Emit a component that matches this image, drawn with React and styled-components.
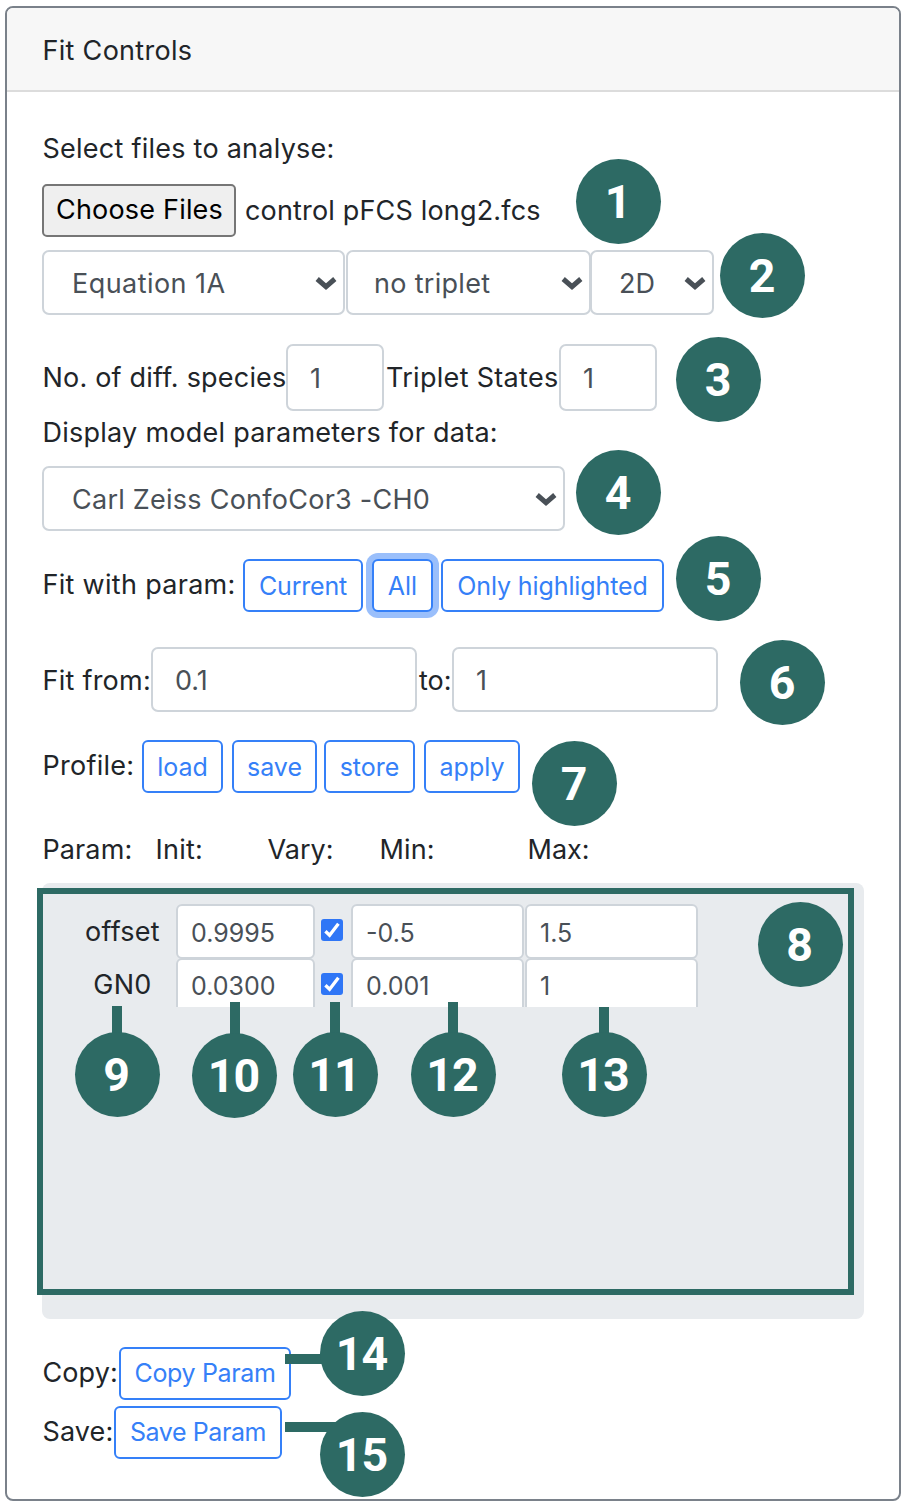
import React from "react";
import styled, { createGlobalStyle, css } from "styled-components";

const GlobalStyle = createGlobalStyle`
  *, *::before, *::after { box-sizing: border-box; }
  body {
    margin: 0;
    background: #fff;
    color: #212529;
    font-family: Inter, "Liberation Sans", sans-serif;
    font-size: 27px;
  }
`;

const Page = styled.main`
  position: relative;
  width: 914px;
  height: 1512px;
  padding: 6px 0 0 5px;
  overflow: hidden;
`;

const Card = styled.section`
  width: 896px;
  height: 1495px;
  border: 2px solid #7a818a;
  border-radius: 8px;
  background: #fff;
  overflow: hidden;
`;

const CardHeader = styled.header`
  display: flex;
  align-items: center;
  height: 84px;
  padding: 3px 35px 0;
  background: #f7f7f7;
  border-bottom: 2px solid #dcdcdc;
`;

const CardBody = styled.div`
  display: flex;
  flex-direction: column;
  padding: 37px 0 0 35px;
`;

const Row = styled.div`
  display: flex;
  align-items: center;
  flex: none;
  height: ${(p) => p.$h}px;
  margin-top: ${(p) => p.$mt || 0}px;
`;

const Label = styled.span`
  flex: none;
  width: ${(p) => (p.$w ? `${p.$w}px` : "auto")};
  padding-left: ${(p) => p.$pl ?? 0.5}px;
  padding-top: ${(p) => p.$pt || 0}px;
  padding-bottom: ${(p) => p.$pb || 0}px;
  line-height: 36px;
  letter-spacing: ${(p) => p.$ls ?? 0.25}px;
  white-space: nowrap;
`;

const FileButton = styled.button`
  width: 194px;
  height: 53px;
  padding: 0 0 2px 1px;
  margin-right: 9px;
  border: 2px solid #767676;
  border-radius: 5px;
  background: #efefef;
  color: #000;
  font: inherit;
  letter-spacing: 0.2px;
  white-space: nowrap;
`;

const fieldBase = css`
  display: flex;
  align-items: center;
  flex: none;
  width: ${(p) => p.$w}px;
  border: 2px solid #ced4da;
  border-radius: 7px;
  background: #fff;
  color: #495057;
  white-space: nowrap;
  letter-spacing: ${(p) => p.$ls || 0}px;
`;

const Picker = styled.div`
  ${fieldBase}
  justify-content: space-between;
  height: 65px;
  margin-right: ${(p) => p.$mr || 0}px;
  padding: 2px 6px 0 ${(p) => p.$pl ?? 28}px;
`;

const Field = styled.div`
  ${fieldBase}
  height: ${(p) => p.$h || 65}px;
  padding: ${(p) => p.$pt ?? 1}px 0 0 22px;
`;

const OutlineButton = styled.button`
  flex: none;
  width: ${(p) => p.$w}px;
  height: 53px;
  margin-right: ${(p) => p.$mr || 0}px;
  padding: 0 0 ${(p) => p.$pb || 0}px;
  border: 2px solid #3580f8;
  border-radius: 6px;
  background: #fff;
  color: #3580f8;
  font: inherit;
  font-size: 25px;
  letter-spacing: ${(p) => p.$ls || 0}px;
  white-space: nowrap;
  box-shadow: ${(p) => (p.$focused ? "0 0 0 6px #9abffb" : "none")};
`;

const ParamPanel = styled.div`
  flex: none;
  width: 822px;
  height: 436px;
  margin-top: 12px;
  padding: 21px 0 0 42px;
  border-radius: 8px;
  background: #e8ebee;
`;

const ParamList = styled.div`
  height: 103px;
  overflow: hidden;
`;

const ParamRow = styled.div`
  display: flex;
  height: 54px;
`;

const ParamName = styled.span`
  display: flex;
  justify-content: center;
  width: 92px;
  padding-right: 15px;
  line-height: ${(p) => p.$lh}px;
  letter-spacing: 0.25px;
`;

const ParamField = styled.div`
  ${fieldBase}
  height: 55px;
  margin-right: ${(p) => p.$mr || 0}px;
  padding: ${(p) => p.$pt}px 0 0 13px;
  border-radius: 6px;
  font-size: 25px;
`;

const Check = styled.span`
  display: grid;
  place-items: center;
  width: 22px;
  height: 22px;
  margin: ${(p) => p.$mt}px 8px 0 6px;
  border-radius: 3px;
  background: #2f76f6;
`;

const Annotations = styled.div`
  position: absolute;
  inset: 0;
  pointer-events: none;
`;

const Frame = styled.div`
  position: absolute;
  left: 37px;
  top: 888px;
  width: 817px;
  height: 407px;
  border: 6px solid #2d6a64;
`;

const Leader = styled.div`
  position: absolute;
  left: ${(p) => p.$x}px;
  top: ${(p) => p.$y}px;
  width: ${(p) => p.$w}px;
  height: ${(p) => p.$h}px;
  background: #2d6a64;
`;

const Badge = styled.div`
  position: absolute;
  left: ${(p) => p.$x}px;
  top: ${(p) => p.$y}px;
  width: 85px;
  height: 85px;
  padding: 2px 2px 0 0;
  border-radius: 50%;
  background: #2d6a64;
  color: #fff;
  font: bold 46.5px/83px Roboto, "Liberation Sans", sans-serif;
  letter-spacing: -1px;
  text-align: center;
`;

const Chevron = () => (
  <svg width="22" height="14" viewBox="0 0 22 14" fill="none">
    <path d="M2.2 2 11 9.6 19.800 2" stroke="#495057" strokeWidth="5" />
  </svg>
);

const Tick = () => (
  <svg width="22" height="22" viewBox="0 0 22 22" fill="none">
    <path d="M4.4 12.2 8.6 16.3 17.4 4.7" stroke="#fff" strokeWidth="3.3" />
  </svg>
);

const params = [
  { name: "offset", init: "0.9995", min: "-0.5", max: "1.5", lh: 56, pt: 2, check: 15 },
  { name: "GN0", init: "0.0300", min: "0.001", max: "1", lh: 54, pt: 0, check: 15 },
];

const badges = [
  [576, 159], [720, 233], [676, 337], [576, 450], [676, 536],
  [740, 640], [532, 741], [757.5, 902], [74.5, 1032], [192, 1033],
  [292.5, 1032], [410.5, 1032], [561.5, 1032], [320, 1311], [320, 1412],
];

const leaders = [
  [112, 1006, 10, 32], [230, 1002, 10, 36], [330, 1002, 10, 36],
  [448, 1002, 10, 36], [599, 1007, 10, 31], [285, 1354, 44, 10], [285, 1422, 56, 10],
];

export default function App() {
  return (
    <Page>
      <GlobalStyle />
      <Card>
        <CardHeader><Label $ls={0.3}>Fit Controls</Label></CardHeader>
        <CardBody>
          <Row $h={40}><Label>Select files to analyse:</Label></Row>
          <Row $h={53} $mt={15}>
            <FileButton>Choose Files</FileButton>
            <Label $pl={0} $ls={0.17}>control pFCS long2.fcs</Label>
          </Row>
          <Row $h={65} $mt={13}>
            <Picker $w={303} $mr={1} $ls={0.45}>Equation 1A<Chevron /></Picker>
            <Picker $w={245} $mr={-1} $pl={26} $ls={0.3}>no triplet<Chevron /></Picker>
            <Picker $w={124} $pl={27}>2D<Chevron /></Picker>
          </Row>
          <Row $h={67} $mt={29}>
            <Label $w={244} $ls={0.2}>No. of diff. species</Label>
            <Field $w={98} $h={67}>1</Field>
            <Label $w={175} $pl={2} $ls={0.3}>Triplet States</Label>
            <Field $w={98} $h={67}>1</Field>
          </Row>
          <Row $h={40} $mt={1}><Label $pt={1}>Display model parameters for data:</Label></Row>
          <Row $h={65} $mt={14}>
            <Picker $w={523} $ls={0.25}>Carl Zeiss ConfoCor3 -CH0<Chevron /></Picker>
          </Row>
          <Row $h={53} $mt={28}>
            <Label $w={201} $ls={0.3} $pb={1}>Fit with param:</Label>
            <OutlineButton $w={120} $mr={9} $ls={-0.2}>Current</OutlineButton>
            <OutlineButton $w={61} $mr={8} $focused>All</OutlineButton>
            <OutlineButton $w={223} $ls={-0.1}>Only highlighted</OutlineButton>
          </Row>
          <Row $h={65} $mt={35}>
            <Label $w={109} $pt={2}>Fit from:</Label>
            <Field $w={266} $pt={2}>0.1</Field>
            <Label $w={35} $pl={2} $pt={2} $ls={0}>to:</Label>
            <Field $w={266} $pt={2}>1</Field>
          </Row>
          <Row $h={53} $mt={28}>
            <Label $w={100} $pb={1}>Profile:</Label>
            <OutlineButton $w={81} $mr={9}>load</OutlineButton>
            <OutlineButton $w={85} $mr={7}>save</OutlineButton>
            <OutlineButton $w={91} $mr={9}>store</OutlineButton>
            <OutlineButton $w={96}>apply</OutlineButton>
          </Row>
          <Row $h={43} $mt={35}>
            <Label $w={113} $ls={0.1}>Param:</Label>
            <Label $w={112}>Init:</Label>
            <Label $w={112} $ls={0}>Vary:</Label>
            <Label $w={148} $ls={0.1}>Min:</Label>
            <Label $ls={0}>Max:</Label>
          </Row>
          <ParamPanel>
            <ParamList>
              {params.map((p) => (
                <ParamRow key={p.name}>
                  <ParamName $lh={p.lh}>{p.name}</ParamName>
                  <ParamField $w={139} $pt={p.pt}>{p.init}</ParamField>
                  <Check $mt={p.check}><Tick /></Check>
                  <ParamField $w={173} $pt={p.pt} $mr={1}>{p.min}</ParamField>
                  <ParamField $w={173} $pt={p.pt}>{p.max}</ParamField>
                </ParamRow>
              ))}
            </ParamList>
          </ParamPanel>
          <Row $h={53} $mt={28}>
            <Label $w={77} $pb={2} $ls={0.1}>Copy:</Label>
            <OutlineButton $w={172} $pb={1} $ls={-0.35}>Copy Param</OutlineButton>
          </Row>
          <Row $h={53} $mt={6}>
            <Label $w={72} $pb={2} $ls={0.1}>Save:</Label>
            <OutlineButton $w={168} $pb={1} $ls={-0.4}>Save Param</OutlineButton>
          </Row>
        </CardBody>
      </Card>
      <Annotations>
        <Frame />
        {leaders.map(([x, y, w, h]) => (
          <Leader key={`${x}-${y}`} $x={x} $y={y} $w={w} $h={h} />
        ))}
        {badges.map(([x, y], i) => (
          <Badge key={i} $x={x} $y={y}>{i + 1}</Badge>
        ))}
      </Annotations>
    </Page>
  );
}
